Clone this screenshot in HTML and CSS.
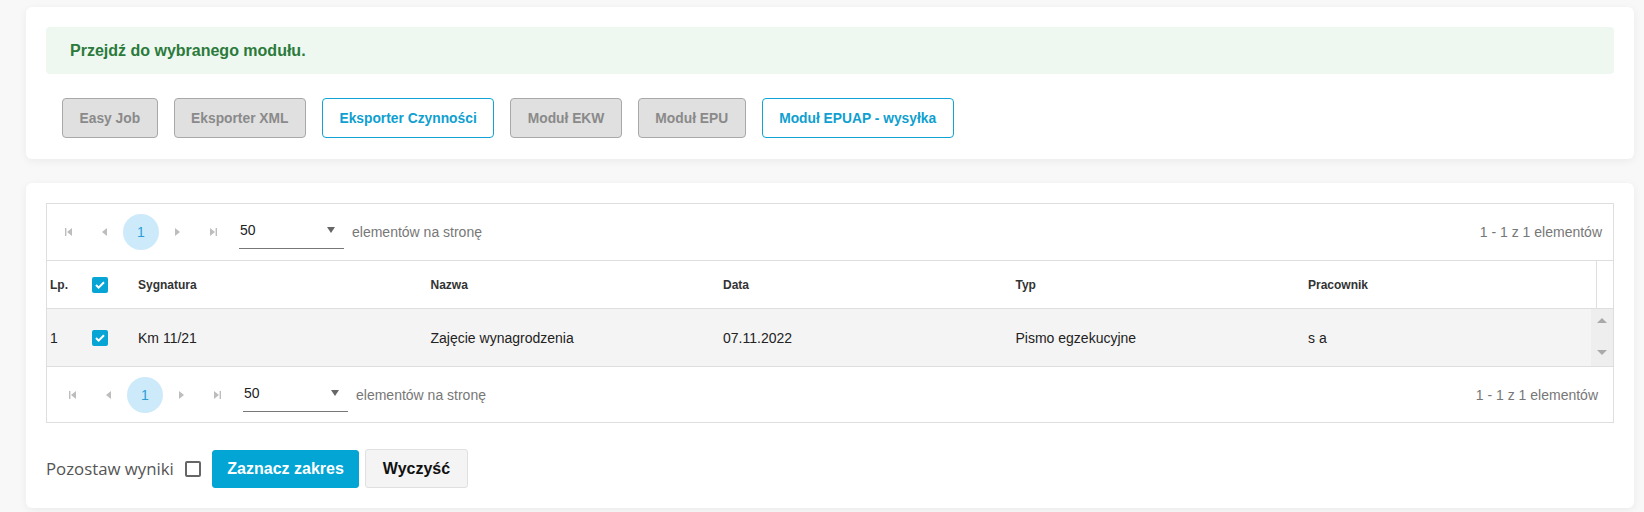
FILE: index.html
```html
<!DOCTYPE html>
<html lang="pl">
<head>
  <meta charset="UTF-8" />
  <title>Moduły</title>
  <link rel="stylesheet" href="styles.css">
</head>
<body>
  <div class="page">
    <div class="card">
      <div class="alert">Przejdź do wybranego modułu.</div>
      <div class="modules">
        <button class="mod off">Easy Job</button>
        <button class="mod off">Eksporter XML</button>
        <button class="mod on">Eksporter Czynności</button>
        <button class="mod off">Moduł EKW</button>
        <button class="mod off">Moduł EPU</button>
        <button class="mod on">Moduł EPUAP - wysyłka</button>
      </div>
    </div>

    <div class="card">
      <div class="grid">
        <div class="pager">
          <div class="navs">
            <span class="nav"><svg width="8" height="8" viewBox="0 0 8 8"><rect x="0" y="0" width="1.4" height="8"/><path d="M7 0v8L2 4z"/></svg></span>
            <span class="nav"><svg width="8" height="8" viewBox="0 0 8 8"><path d="M6 0v8L1 4z"/></svg></span>
            <span class="page-num">1</span>
            <span class="nav"><svg width="8" height="8" viewBox="0 0 8 8"><path d="M2 0v8l5-4z"/></svg></span>
            <span class="nav"><svg width="8" height="8" viewBox="0 0 8 8"><path d="M1 0v8l5-4z"/><rect x="6.6" y="0" width="1.4" height="8"/></svg></span>
          </div>
          <span class="size">50<span class="caret"></span></span>
          <span class="per">elementów na stronę</span>
          <span class="info">1 - 1 z 1 elementów</span>
        </div>

        <div class="row head">
          <div class="c lp">Lp.</div>
          <div class="c ck"><span class="box"><svg width="10" height="8" viewBox="0 0 10 8"><path d="M1 4l2.6 2.6L9 1.2" fill="none" stroke="#fff" stroke-width="2"/></svg></span></div>
          <div class="c">Sygnatura</div>
          <div class="c">Nazwa</div>
          <div class="c">Data</div>
          <div class="c">Typ</div>
          <div class="c">Pracownik</div>
          <div class="c sb-head"></div>
        </div>

        <div class="row body">
          <div class="c lp">1</div>
          <div class="c ck"><span class="box"><svg width="10" height="8" viewBox="0 0 10 8"><path d="M1 4l2.6 2.6L9 1.2" fill="none" stroke="#fff" stroke-width="2"/></svg></span></div>
          <div class="c">Km 11/21</div>
          <div class="c">Zajęcie wynagrodzenia</div>
          <div class="c">07.11.2022</div>
          <div class="c">Pismo egzekucyjne</div>
          <div class="c">s a</div>
          <div class="c scroll">
            <span class="arr up"></span>
            <span class="arr down"></span>
          </div>
        </div>

        <div class="pager bottom">
          <div class="navs">
            <span class="nav"><svg width="8" height="8" viewBox="0 0 8 8"><rect x="0" y="0" width="1.4" height="8"/><path d="M7 0v8L2 4z"/></svg></span>
            <span class="nav"><svg width="8" height="8" viewBox="0 0 8 8"><path d="M6 0v8L1 4z"/></svg></span>
            <span class="page-num">1</span>
            <span class="nav"><svg width="8" height="8" viewBox="0 0 8 8"><path d="M2 0v8l5-4z"/></svg></span>
            <span class="nav"><svg width="8" height="8" viewBox="0 0 8 8"><path d="M1 0v8l5-4z"/><rect x="6.6" y="0" width="1.4" height="8"/></svg></span>
          </div>
          <span class="size">50<span class="caret"></span></span>
          <span class="per">elementów na stronę</span>
          <span class="info">1 - 1 z 1 elementów</span>
        </div>
      </div>

      <div class="actions">
        <label class="keep">Pozostaw wyniki <span class="keep-box"></span></label>
        <button class="primary">Zaznacz zakres</button>
        <button class="plain">Wyczyść</button>
      </div>
    </div>
  </div>
</body>
</html>
```

FILE: styles.css
```css
* { box-sizing: border-box; }
body {
  margin: 0;
  background: #f8f8f8;
  font-family: "Liberation Sans", Arial, sans-serif;
  color: #222;
}
.page {
  padding: 7px 10px 0 26px;
}
.card {
  background: #fff;
  border-radius: 6px;
  padding: 20px;
  box-shadow: 0 2px 8px rgba(0,0,0,0.06);
  margin-bottom: 24px;
}
.alert {
  background: #eef8f1;
  color: #2b7a3b;
  font-weight: 700;
  font-size: 16px;
  border-radius: 4px;
  height: 47px;
  line-height: 47px;
  padding: 0 24px;
}
.modules {
  display: flex;
  gap: 16px;
  padding: 24px 0 1px 16px;
}
.mod {
  height: 40px;
  padding: 0 16.5px;
  font-family: "Liberation Sans", Arial, sans-serif;
  font-weight: 700;
  font-size: 13.8px;
  border-radius: 4px;
  background: #fff;
}
.mod.off {
  background: #e0e0e0;
  border: 1px solid #a8a8a8;
  color: #8a8a8a;
}
.mod.on {
  border: 1px solid #10a3d4;
  color: #0f9fd0;
  padding: 0 16.5px;
}
.grid {
  border: 1px solid #dedede;
}
.pager {
  display: flex;
  align-items: center;
  height: 56px;
  padding: 0 11px 0 4px;
  font-size: 14px;
}
.pager.bottom {
  padding: 0 15px 0 8px;
  border-top: 1px solid #dedede;
}
.navs {
  display: flex;
  align-items: center;
}
.nav {
  width: 36px;
  height: 36px;
  display: flex;
  align-items: center;
  justify-content: center;
  fill: #bdbdbd;
}
.page-num {
  width: 36px;
  height: 36px;
  border-radius: 50%;
  background: #cdeafb;
  color: #2a9fd8;
  display: flex;
  align-items: center;
  justify-content: center;
}
.size {
  width: 105px;
  height: 34px;
  line-height: 20px;
  margin-left: 8px;
  border-bottom: 1px solid #777;
  display: flex;
  align-items: flex-start;
  justify-content: space-between;
  padding: 5px 0 0 1px;
  color: #222;
}
.caret {
  width: 0;
  height: 0;
  border-left: 4px solid transparent;
  border-right: 4px solid transparent;
  border-top: 6px solid #666;
  margin: 7px 9px 0 0;
}
.per {
  color: #777;
  margin-left: 8px;
}
.info {
  margin-left: auto;
  color: #777;
}
.row {
  display: grid;
  grid-template-columns: 33px 46px repeat(4, 292.5px) 1fr 17px;
  border-top: 1px solid #dedede;
  align-items: center;
}
.row.head {
  height: 48px;
  font-size: 12px;
  font-weight: 700;
  color: #333;
}
.row.body {
  height: 58px;
  font-size: 14px;
  background: #f4f4f4;
}
.c {
  padding-left: 12px;
  white-space: nowrap;
}
.c.lp { padding-left: 3px; }
.c.ck { padding-left: 12px; display: flex; }
.box {
  width: 16px;
  height: 16px;
  background: #07a4d6;
  border-radius: 2px;
  display: flex;
  align-items: center;
  justify-content: center;
}
.sb-head {
  height: 100%;
  border-left: 1px solid #dedede;
}
.scroll {
  height: 100%;
  background: #eeeeee;
  padding: 0;
  margin-left: -5px;
  width: 22px;
  position: relative;
}
.arr {
  position: absolute;
  left: 6px;
  width: 0;
  height: 0;
  border-left: 5px solid transparent;
  border-right: 5px solid transparent;
}
.arr.up { top: 9px; border-bottom: 5px solid #a9a9a9; }
.arr.down { bottom: 11px; border-top: 5px solid #a9a9a9; }
.actions {
  display: flex;
  align-items: center;
  padding-top: 26px;
}
.keep {
  font-family: "Open Sans", sans-serif;
  font-size: 16.8px;
  color: #555;
  display: flex;
  align-items: center;
  margin-right: 11px;
}
.keep-box {
  width: 16px;
  height: 16px;
  border: 2px solid #666;
  border-radius: 2px;
  margin-left: 11px;
}
button.primary {
  height: 38px;
  padding: 0 14.5px;
  background: #02a5d4;
  border: 1px solid #02a5d4;
  color: #fff;
  font-weight: 700;
  font-size: 16px;
  font-family: "Liberation Sans", Arial, sans-serif;
  border-radius: 3px;
  margin-right: 6px;
}
button.plain {
  height: 39px;
  padding: 0 16.5px;
  background: #f4f4f4;
  border: 1px solid #e0e0e0;
  color: #111;
  font-weight: 700;
  font-size: 16px;
  font-family: "Liberation Sans", Arial, sans-serif;
  border-radius: 3px;
}
```
